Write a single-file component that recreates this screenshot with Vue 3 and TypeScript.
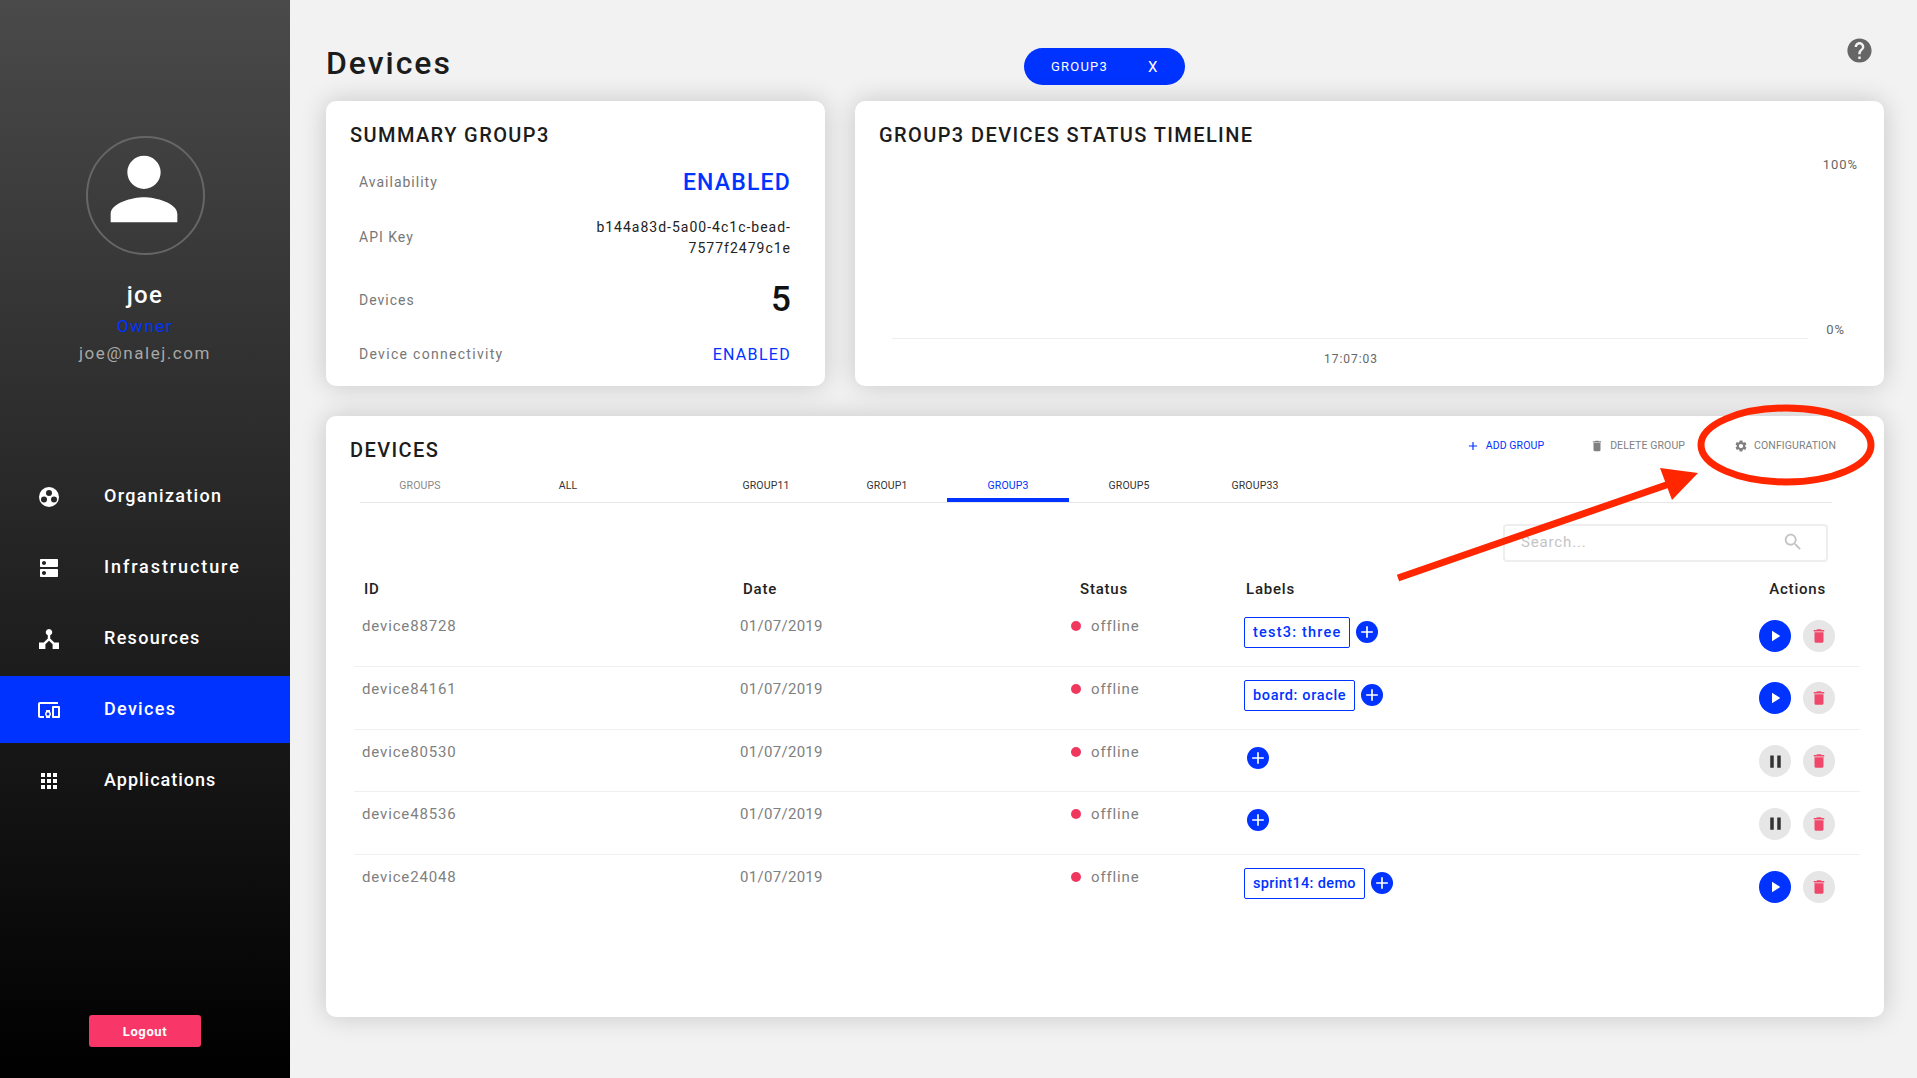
<script setup lang="ts">
const P: Record<string, string> = {
  person: 'M12 12c2.21 0 4-1.79 4-4s-1.79-4-4-4-4 1.79-4 4 1.79 4 4 4zm0 2c-2.67 0-8 1.34-8 4v2h16v-2c0-2.66-5.33-4-8-4z',
  dns: 'M20 13H4c-.55 0-1 .45-1 1v6c0 .55.45 1 1 1h16c.55 0 1-.45 1-1v-6c0-.55-.45-1-1-1zM7 19c-1.1 0-2-.9-2-2s.9-2 2-2 2 .9 2 2-.9 2-2 2zM20 3H4c-.55 0-1 .45-1 1v6c0 .55.45 1 1 1h16c.55 0 1-.45 1-1V4c0-.55-.45-1-1-1zM7 9c-1.1 0-2-.9-2-2s.9-2 2-2 2 .9 2 2-.9 2-2 2z',
  apps: 'M4 8h4V4H4v4zm6 12h4v-4h-4v4zm-6 0h4v-4H4v4zm0-6h4v-4H4v4zm6 0h4v-4h-4v4zm6-10v4h4V4h-4zm-6 4h4V4h-4v4zm6 6h4v-4h-4v4zm0 6h4v-4h-4v4z',
  devices: 'M3 6h18V4H3c-1.1 0-2 .9-2 2v12c0 1.1.9 2 2 2h4v-2H3V6zm10 6H9v1.78c-.61.55-1 1.33-1 2.22s.39 1.67 1 2.22V20h4v-1.78c.61-.55 1-1.34 1-2.22s-.39-1.67-1-2.22V12zm-2 5.5c-.83 0-1.5-.67-1.5-1.5s.67-1.5 1.5-1.5 1.5.67 1.5 1.5-.67 1.5-1.5 1.5zM22 8h-6c-.5 0-1 .5-1 1v10c0 .5.5 1 1 1h6c.5 0 1-.5 1-1V9c0-.5-.5-1-1-1zm-1 10h-4v-8h4v8z',
  org: 'M12 2a10 10 0 1 0 0 20 10 10 0 0 0 0-20zM12 5a3 3 0 1 1 0 6 3 3 0 0 1 0-6zM7 11.5a3 3 0 1 1 0 6 3 3 0 0 1 0-6zM17 11.5a3 3 0 1 1 0 6 3 3 0 0 1 0-6z',
  res: 'M12 2a3.2 3.2 0 0 1 1.2 6.17V11.5l4.1 4.1H22V22h-6.4v-4.7l-3.6-3.6-3.6 3.6V22H2v-6.4h4.7l4.1-4.1V8.17A3.2 3.2 0 0 1 12 2z',
  del: 'M6 19c0 1.1.9 2 2 2h8c1.1 0 2-.9 2-2V7H6v12zM19 4h-3.5l-1-1h-5l-1 1H5v2h14V4z',
  gear: 'M19.14 12.94c.04-.3.06-.61.06-.94 0-.32-.02-.64-.07-.94l2.03-1.58c.18-.14.23-.41.12-.61l-1.92-3.32c-.12-.22-.37-.29-.59-.22l-2.39.96c-.5-.38-1.03-.7-1.62-.94l-.36-2.54c-.04-.24-.24-.41-.48-.41h-3.84c-.24 0-.43.17-.47.41l-.36 2.54c-.59.24-1.13.57-1.62.94l-2.39-.96c-.22-.08-.47 0-.59.22L2.74 8.87c-.12.21-.08.47.12.61l2.03 1.58c-.05.3-.09.63-.09.94s.02.64.07.94l-2.03 1.58c-.18.14-.23.41-.12.61l1.92 3.32c.12.22.37.29.59.22l2.39-.96c.5.38 1.03.7 1.62.94l.36 2.54c.05.24.24.41.48.41h3.84c.24 0 .44-.17.47-.41l.36-2.54c.59-.24 1.13-.56 1.62-.94l2.39.96c.22.08.47 0 .59-.22l1.92-3.32c.12-.22.07-.47-.12-.61l-2.01-1.58zM12 15.6c-1.98 0-3.6-1.62-3.6-3.6s1.62-3.6 3.6-3.6 3.6 1.62 3.6 3.6-1.62 3.6-3.6 3.6z',
  help: 'M12 2C6.48 2 2 6.48 2 12s4.48 10 10 10 10-4.48 10-10S17.52 2 12 2zm1 17h-2v-2h2v2zm2.07-7.75l-.9.92C13.45 12.9 13 13.5 13 15h-2v-.5c0-1.1.45-2.1 1.17-2.83l1.24-1.26c.37-.36.59-.86.59-1.41 0-1.1-.9-2-2-2s-2 .9-2 2H8c0-2.21 1.79-4 4-4s4 1.79 4 4c0 .88-.36 1.68-.93 2.25z',
  search: 'M15.5 14h-.79l-.28-.27C15.41 12.59 16 11.11 16 9.5 16 5.91 13.09 3 9.5 3S3 5.91 3 9.5 5.91 16 9.5 16c1.61 0 3.09-.59 4.23-1.57l.27.28v.79l5 4.99L20.49 19l-4.99-5zm-6 0C7.01 14 5 11.99 5 9.5S7.01 5 9.5 5 14 7.01 14 9.5 11.99 14 9.5 14z',
  plus: 'M19 13h-6v6h-2v-6H5v-2h6V5h2v6h6v2z',
  play: 'M8 5v14l11-7z',
  pause: 'M6 19h4V5H6v14zm8-14v14h4V5h-4z',
}
const nav = [
  { label: 'Organization', icon: 'org', active: false, cls: '' },
  { label: 'Infrastructure', icon: 'dns', active: false, cls: 'wide' },
  { label: 'Resources', icon: 'res', active: false, cls: '' },
  { label: 'Devices', icon: 'devices', active: true, cls: '' },
  { label: 'Applications', icon: 'apps', active: false, cls: 'tight' },
]
const tabs = [
  { label: 'GROUPS', cls: 'muted' },
  { label: 'ALL', cls: 'all' },
  { label: 'GROUP11', cls: 'g11' },
  { label: 'GROUP1', cls: '' },
  { label: 'GROUP3', cls: 'active' },
  { label: 'GROUP5', cls: '' },
  { label: 'GROUP33', cls: 'g33' },
]
const rows = [
  { id: 'device88728', label: 'test3: three', spacing: '1.2px', running: false },
  { id: 'device84161', label: 'board: oracle', spacing: '.65px', running: false },
  { id: 'device80530', label: '', spacing: '0', running: true },
  { id: 'device48536', label: '', spacing: '0', running: true },
  { id: 'device24048', label: 'sprint14: demo', spacing: '.35px', running: false },
]
</script>

<template>
  <div class="page">
    <aside class="side">
      <div class="avatar">
        <svg viewBox="0 0 24 24" class="person"><path :d="P.person" /></svg>
      </div>
      <div class="uname">joe</div>
      <div class="role">Owner</div>
      <div class="email">joe@nalej.com</div>
      <nav class="nav">
        <div v-for="n in nav" :key="n.label" class="nav-item" :class="[{ on: n.active }, n.cls]">
          <svg viewBox="0 0 24 24" class="nav-ico"><path :d="P[n.icon]" fill-rule="evenodd" /></svg>
          <span>{{ n.label }}</span>
        </div>
      </nav>
      <button class="logout">Logout</button>
    </aside>

    <main class="main">
      <header class="top">
        <h1>Devices</h1>
        <div class="pill"><span>GROUP3</span><b>X</b></div>
        <svg viewBox="0 0 24 24" class="help"><path :d="P.help" /></svg>
      </header>

      <section class="cards">
        <div class="card summary">
          <h2>SUMMARY GROUP3</h2>
          <div class="s-row r1"><label>Availability</label><span class="big-blue">ENABLED</span></div>
          <div class="s-row r2"><label>API Key</label><span class="key">b144a83d-5a00-4c1c-bead-<br />7577f2479c1e</span></div>
          <div class="s-row r3"><label>Devices</label><span class="count">5</span></div>
          <div class="s-row r4"><label>Device connectivity</label><span class="small-blue">ENABLED</span></div>
        </div>
        <div class="card timeline">
          <h2>GROUP3 DEVICES STATUS TIMELINE</h2>
          <div class="chart">
            <span class="p100">100%</span>
            <span class="p0">0%</span>
            <div class="axis"></div>
            <span class="time">17:07:03</span>
          </div>
        </div>
      </section>

      <section class="card devices">
        <div class="dev-head">
          <h2>DEVICES</h2>
          <div class="acts">
            <span class="act add"><svg viewBox="0 0 24 24"><path :d="P.plus" /></svg>ADD GROUP</span>
            <span class="act del"><svg viewBox="0 0 24 24"><path :d="P.del" /></svg>DELETE GROUP</span>
            <span class="act conf"><svg viewBox="0 0 24 24"><path :d="P.gear" /></svg>CONFIGURATION</span>
          </div>
        </div>
        <div class="tabs">
          <div v-for="t in tabs" :key="t.label" class="tab" :class="t.cls">{{ t.label }}</div>
        </div>
        <div class="search-row">
          <div class="search"><span>Search...</span><svg viewBox="0 0 24 24"><path :d="P.search" /></svg></div>
        </div>
        <div class="grid thead">
          <div>ID</div><div>Date</div><div>Status</div><div>Labels</div><div class="ac">Actions</div>
        </div>
        <div v-for="r in rows" :key="r.id" class="grid row">
          <div class="txt">{{ r.id }}</div>
          <div class="txt date">01/07/2019</div>
          <div class="txt status"><i class="dot"></i>offline</div>
          <div class="labels">
            <span v-if="r.label" class="chip" :style="{ letterSpacing: r.spacing }">{{ r.label }}</span>
            <span class="addc" :class="{ solo: !r.label }"><svg viewBox="0 0 24 24"><path :d="P.plus" /></svg></span>
          </div>
          <div class="btns">
            <span class="rb" :class="r.running ? 'grey pause' : 'blue'">
              <svg viewBox="0 0 24 24"><path :d="r.running ? P.pause : P.play" /></svg>
            </span>
            <span class="rb grey trash"><svg viewBox="0 0 24 24"><path :d="P.del" /></svg></span>
          </div>
        </div>
      </section>
    </main>

    <svg class="marks" viewBox="0 0 1917 1078" width="1917" height="1078">
      <ellipse cx="1786" cy="445" rx="85" ry="37" fill="none" stroke="#ff2600" stroke-width="7" />
      <line x1="1398" y1="578" x2="1672" y2="483" stroke="#ff2600" stroke-width="7" />
      <polygon points="1660,468 1698,473 1672,500" fill="#ff2600" />
    </svg>
  </div>
</template>

<style>
html, body { margin: 0; background: #f2f2f2; }
</style>

<style scoped>
.page {
  position: relative; display: flex; width: 1917px; height: 1078px; overflow: hidden;
  background: #f2f2f2; font-family: Roboto, "Liberation Sans", sans-serif; color: #1c1c1c;
}
.side {
  width: 290px; flex: none; display: flex; flex-direction: column; align-items: center;
  background: linear-gradient(180deg, #4a4a4a 0%, #000 100%);
  color: #fff;
}
.avatar {
  width: 115px; height: 115px; margin-top: 136px; border: 2px solid #666; border-radius: 50%;
  display: flex; align-items: center; justify-content: center;
}
.person { width: 100px; height: 100px; fill: #fff; margin-top: -14px; margin-left: -2px; }
.uname { margin-top: 25px; font-size: 24px; line-height: 30px; font-weight: 500; letter-spacing: 1.4px; }
.role { margin-top: 6px; font-size: 17px; line-height: 20px; color: #0033ff; letter-spacing: 1.5px; }
.email { margin-top: 7px; font-size: 17px; line-height: 20px; color: #a8a8a8; letter-spacing: 1.55px; }
.nav { align-self: stretch; margin-top: 100px; display: flex; flex-direction: column; gap: 4px; }
.nav-item { height: 67px; display: flex; align-items: center; font-size: 18px; font-weight: 500; letter-spacing: 1.3px; }
.nav-item span { margin-top: -2px; }
.nav-item.on { background: #0033ff; }
.nav-item.wide { letter-spacing: 1.9px; }
.nav-item.tight { letter-spacing: 1px; }
.nav-ico { width: 24px; height: 24px; fill: #fff; margin-left: 37px; margin-right: 43px; }
.logout {
  margin-top: auto; margin-bottom: 31px; width: 112px; height: 32px; border: 0; border-radius: 3px;
  background: #f83768; color: #fff; font: 700 13px Roboto, sans-serif; letter-spacing: .6px;
}

.main { flex: 1; padding: 0 33px 0 36px; min-width: 0; }
.top { height: 101px; display: flex; align-items: center; position: relative; }
.top h1 { width: 698px; margin: 25px 0 0; font-size: 32px; line-height: 40px; font-weight: 500; letter-spacing: 1.95px; }
.pill {
  width: 161px; height: 37px; margin-top: 32px; background: #0033ff; border-radius: 19px; color: #fff;
  display: flex; align-items: center; box-sizing: border-box; padding-left: 27px; font-size: 13px; letter-spacing: 1.2px;
}
.pill b { margin-left: 40px; font-size: 15px; font-weight: 400; }
.help { width: 29px; height: 29px; fill: #666; margin: 0 10px 0 auto; }
.card { background: #fff; border-radius: 10px; box-shadow: 0 0 26px rgba(0, 0, 0, .18); box-sizing: border-box; }
.card h2 { margin: 0; font-size: 20px; line-height: 20px; font-weight: 500; letter-spacing: 1.4px; }
.cards { display: grid; grid-template-columns: 499px 1fr; gap: 30px; height: 285px; }
.summary { padding: 24px 34px 0 24px; }
.s-row { display: flex; align-items: center; justify-content: space-between; padding-left: 9px; }
.s-row label { font-size: 14px; color: #777; letter-spacing: 1px; }
.r1 { height: 44px; margin-top: 15px; } .r2 { height: 66px; } .r3 { height: 60px; } .r4 { height: 48px; }
.r4 label { letter-spacing: 1.3px; }
.big-blue { font-size: 23px; color: #0033ff; font-weight: 500; letter-spacing: 1.2px; }
.small-blue { font-size: 16px; color: #0033ff; letter-spacing: 1.3px; }
.key { font-size: 14px; line-height: 21px; text-align: right; color: #222; letter-spacing: 1px; padding-top: 2px; }
.count { font-size: 35px; font-weight: 500; color: #111; margin-top: -2px; }
.timeline { padding: 24px 0 0 24px; position: relative; }
.chart { position: absolute; inset: 0; }
.chart span { position: absolute; font-size: 13px; color: #666; letter-spacing: .95px; line-height: 16px; }
.p100 { right: 26px; top: 56px; } .p0 { right: 39px; top: 221px; }
.axis { position: absolute; left: 37px; width: 916px; top: 237px; height: 1px; background: #eee; }
.time { left: 469px; top: 250px; font-size: 12px !important; }

.devices { margin-top: 30px; height: 601px; padding: 24px 24px 0; }
.dev-head { display: flex; justify-content: space-between; height: 32px; }
.acts { display: flex; margin: -4px 24px 0 0; height: 20px; align-items: center; }
.act { display: flex; align-items: center; font-size: 10.5px; letter-spacing: .1px; color: #808080; line-height: 20px; }
.act svg { width: 14px; height: 14px; fill: currentColor; margin-right: 6px; }
.act.add { color: #0033ff; margin-right: 46px; } .act.del { margin-right: 49px; }
.tabs { display: flex; height: 31px; margin: 0 28px 0 10px; border-bottom: 1px solid #e8e8e8; box-sizing: border-box; }
.tab { width: 120px; height: 30px; box-sizing: border-box; text-align: center; font-size: 10.5px; line-height: 28px; letter-spacing: .15px; color: #333; }
.tab.muted { color: #888; }
.tab.all { margin-left: 28px; }
.tab.g11 { margin-left: 77px; width: 122px; }
.tab.active { color: #0033ff; width: 122px; border-bottom: 4px solid #0033ff; }
.tab.g33 { margin-left: 2px; width: 128px; }
.search-row { display: flex; justify-content: flex-end; margin: 21px 32px 0 0; }
.search {
  width: 325px; height: 38px; box-sizing: border-box; border: 2px solid #eee; border-radius: 4px; line-height: 32px;
  display: flex; align-items: center; justify-content: space-between; padding: 0 22px 2px 16px; color: #c4c4c4; font-size: 15px; letter-spacing: .85px;
}
.search svg { width: 22px; height: 22px; fill: #c4c4c4; }
.grid { display: grid; margin-left: 4px; }
.thead {
  margin-top: 17px; height: 25px; line-height: 20px; font-size: 15px; font-weight: 500; color: #222; letter-spacing: .8px;
  padding-left: 10px; grid-template-columns: 379px 337px 166px 1fr 120px;
}
.thead .ac { text-align: right; padding-right: 34px; }
.row { height: 62.8px; box-sizing: border-box; border-bottom: 1px solid #f0f0f0; padding-left: 8px; grid-template-columns: 378px 331px 173px 1fr 120px; }
.row:last-child { border-bottom: 0; }
.txt { padding-top: 12px; line-height: 20px; font-size: 15px; color: #808080; letter-spacing: .85px; }
.txt.date { letter-spacing: .3px; }
.status { display: flex; align-items: center; height: 20px; }
.dot { width: 10px; height: 10px; border-radius: 50%; background: #f0385f; margin-right: 10px; }
.labels { display: flex; padding-top: 13px; }
.chip {
  height: 31px; box-sizing: border-box; border: 1px solid #0033ff; border-radius: 2px; color: #0033ff; padding: 0 8px;
  line-height: 29px; font-size: 14.5px; font-weight: 500; white-space: nowrap;
}
.addc { width: 22px; height: 22px; border-radius: 50%; background: #0033ff; margin: 4px 0 0 6px; display: flex; align-items: center; justify-content: center; }
.addc.solo { margin-left: 3px; margin-top: 4px; }
.addc svg { width: 20px; height: 20px; fill: #fff; }
.btns { display: flex; justify-content: flex-end; gap: 12px; padding: 15.5px 25px 0 0; }
.rb { width: 32px; height: 32px; border-radius: 50%; display: flex; align-items: center; justify-content: center; }
.rb svg { width: 18px; height: 18px; }
.blue { background: #0033ff; } .blue svg { fill: #fff; }
.grey { background: #e6e6e6; } .grey svg { fill: #333; }
.pause svg { width: 21px; height: 21px; }
.trash svg { fill: #f0486b; }
.marks { position: absolute; left: 0; top: 0; pointer-events: none; }
</style>
